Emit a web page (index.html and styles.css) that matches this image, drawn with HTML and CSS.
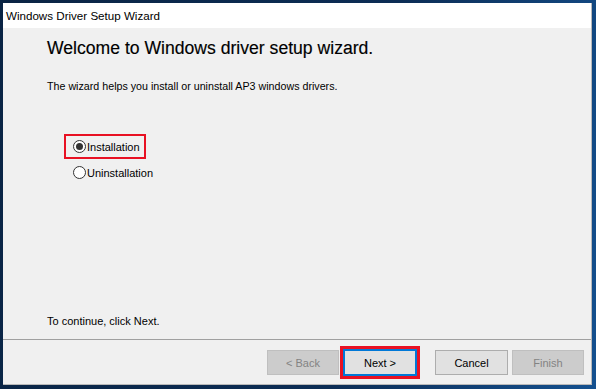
FILE: index.html
```html
<!DOCTYPE html>
<html lang="en">
<head>
    <meta charset="UTF-8">
    <title>Windows Driver Setup Wizard</title>
    <link rel="stylesheet" href="styles.css">
</head>
<body>

<div class="window">
    <div class="titlebar">Windows Driver Setup Wizard</div>

    <div class="content">
        <h1>Welcome to Windows driver setup wizard.</h1>
        <p class="intro">The wizard helps you install or uninstall AP3 windows drivers.</p>

        <div class="options">
            <label class="option highlight">
                <span class="radio checked"></span>Installation
            </label>
            <label class="option">
                <span class="radio"></span>Uninstallation
            </label>
        </div>

        <p class="hint">To continue, click Next.</p>
    </div>

    <div class="footer">
        <button class="btn back" disabled>&lt; Back</button>
        <span class="highlight-btn"><button class="btn default">Next &gt;</button></span>
        <button class="btn cancel">Cancel</button>
        <button class="btn finish" disabled>Finish</button>
    </div>
</div>

</body>
</html>
```

FILE: styles.css
```css
html, body {
    margin: 0;
    padding: 0;
    height: 100%;
}
body {
    background: linear-gradient(100deg, #0a2444 0%, #0c2d55 60%, #14508f 100%);
    font-family: "Liberation Sans", Arial, sans-serif;
    color: #000;
    overflow: hidden;
}
.window {
    margin: 3px 0 0 3px;
    width: 588px;
    height: 381px;
    background-color: #f0f0f0;
    border-right: 1px solid #b9b9b9;
    border-bottom: 1px solid #b9b9b9;
    display: flex;
    flex-direction: column;
}
.titlebar {
    height: 25px;
    background-color: #fff;
    font-size: 11.6px;
    line-height: 25px;
    padding-left: 3px;
}
.content {
    flex: 1;
    display: flex;
    flex-direction: column;
    padding: 9px 0 0 44px;
}
h1 {
    margin: 0;
    font-size: 17.6px;
    font-weight: normal;
    line-height: 22px;
    -webkit-text-stroke: 0.15px #000;
}
.intro {
    margin: 20px 0 0 0;
    font-size: 10.7px;
    line-height: 14px;
}
.options {
    margin: 41px 0 0 17px;
    display: flex;
    flex-direction: column;
    align-items: flex-start;
}
.option {
    display: flex;
    align-items: center;
    font-size: 11px;
    height: 21px;
    padding: 0 4px 0 7px;
    border: 2px solid transparent;
}
.option.highlight {
    border-color: #e81123;
    margin-bottom: 1px;
}
.radio {
    width: 11px;
    height: 11px;
    border: 1px solid #333;
    border-radius: 50%;
    background-color: #fff;
    margin-right: 1px;
    display: flex;
    align-items: center;
    justify-content: center;
}
.radio.checked::after {
    content: "";
    width: 7px;
    height: 7px;
    border-radius: 50%;
    background-color: #333;
}
.hint {
    margin: auto 0 11px 0;
    font-size: 11px;
    line-height: 14px;
}
.footer {
    height: 45px;
    border-top: 1px solid #a0a0a0;
    display: flex;
    align-items: center;
    justify-content: flex-end;
    padding: 1px 7px 0 0;
    box-sizing: border-box;
}
.btn {
    width: 73px;
    height: 25px;
    font-family: "Liberation Sans", Arial, sans-serif;
    font-size: 11px;
    color: #000;
    background-color: #e1e1e1;
    border: 1px solid #adadad;
    padding: 0;
}
.btn:disabled {
    background-color: #cccccc;
    border-color: #bfbfbf;
    color: #838383;
}
.btn.back,
.btn.finish {
    width: 72px;
}
.highlight-btn {
    border: 3px solid #e81123;
    margin: 0 15px 0 1px;
    display: flex;
}
.btn.default {
    width: 74px;
    height: 27px;
    border: 2px solid #0078d7;
}
.btn.cancel {
    margin-right: 4px;
}
```
